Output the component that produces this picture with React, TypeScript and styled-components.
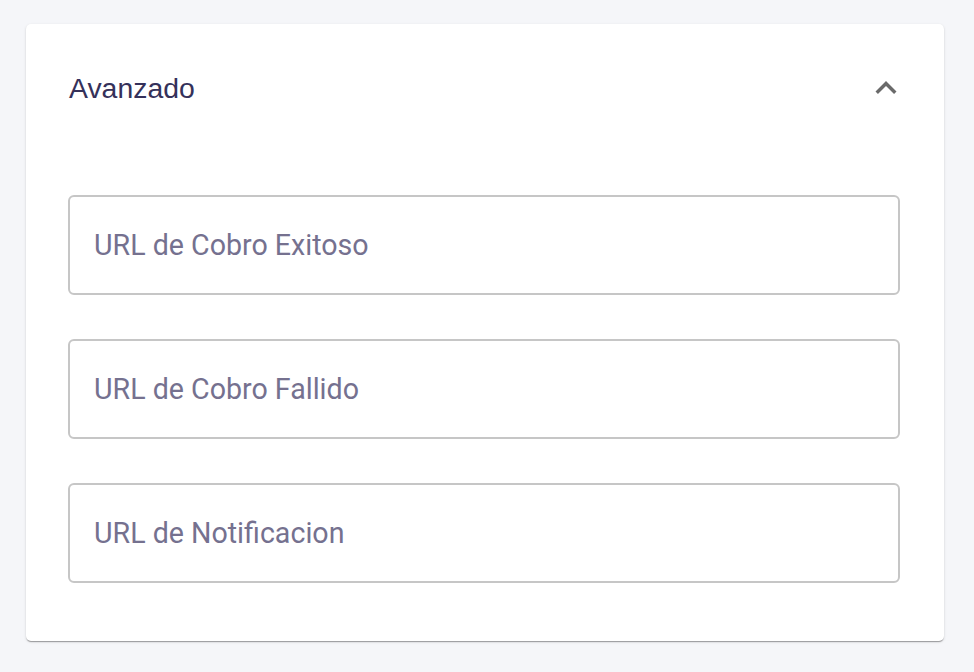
import styled, { createGlobalStyle } from 'styled-components';

const GlobalStyle = createGlobalStyle`
  html, body {
    margin: 0;
    padding: 0;
    background: #f5f6f9;
  }
`;

const Page = styled.div`
  min-height: 672px;
  box-sizing: border-box;
  padding: 24px 0 0 26px;
`;

const Card = styled.section`
  width: 918px;
  background: #fff;
  border-radius: 5px;
  box-shadow: 0 2px 1px -1px rgba(0, 0, 0, 0.2), 0 1px 1px 0 rgba(0, 0, 0, 0.14),
    0 1px 3px 0 rgba(0, 0, 0, 0.12);
`;

const Header = styled.div`
  height: 128px;
  display: flex;
  align-items: center;
  justify-content: space-between;
  padding: 0 37px 0 43px;
`;

const Title = styled.h2`
  margin: 0;
  font-family: 'Liberation Sans', Arial, sans-serif;
  font-weight: 400;
  font-size: 28.4px;
  color: #35315a;
`;

const Toggle = styled.button`
  display: flex;
  border: 0;
  padding: 0;
  background: none;
  cursor: pointer;
  color: #6a6a6a;
`;

const Fields = styled.div`
  display: flex;
  flex-direction: column;
  gap: 44px;
  padding: 43px 44px 58px 42px;
`;

const Field = styled.input`
  height: 100px;
  box-sizing: border-box;
  border: 2px solid #c6c6c6;
  border-radius: 6px;
  padding: 0 24px;
  font-family: Roboto, 'Noto Sans', sans-serif;
  font-size: 28.6px;
  color: #35315a;
  outline: none;

  &::placeholder {
    color: #75718f;
  }
`;

const fields = ['URL de Cobro Exitoso', 'URL de Cobro Fallido', 'URL de Notificacion'];

const App = () => {
  return (
    <Page>
      <GlobalStyle />
      <Card>
        <Header>
          <Title>Avanzado</Title>
          <Toggle aria-label="Contraer">
            <svg width="42" height="42" viewBox="0 0 24 24" fill="currentColor">
              <path d="M12 8l-6 6 1.41 1.41L12 10.83l4.59 4.58L18 14z" />
            </svg>
          </Toggle>
        </Header>
        <Fields>
          {fields.map((label) => (
            <Field key={label} placeholder={label} />
          ))}
        </Fields>
      </Card>
    </Page>
  );
};

export default App;
